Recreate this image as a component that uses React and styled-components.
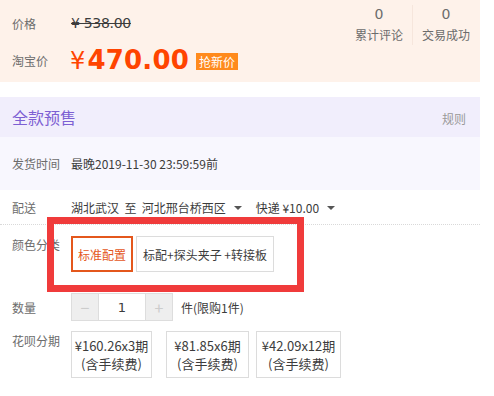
import styled, { createGlobalStyle } from 'styled-components';

const GlobalStyle = createGlobalStyle`
  body {
    margin: 0;
    background: #fff;
    font-family: "Noto Sans CJK SC", "Liberation Sans", sans-serif;
    font-size: 12px;
    color: #3c3c3c;
  }
`;

const installments = [
  { price: '¥160.26x3期', width: 81, gap: 14 },
  { price: '¥81.85x6期', width: 83, gap: 7 },
  { price: '¥42.09x12期', width: 85, gap: 0 },
];

const App = () => (
  <Page>
    <GlobalStyle />
    <PriceBox>
      <PriceRows>
        <PriceRow>
          <Label>价格</Label>
          <OldPrice>¥ 538.00</OldPrice>
        </PriceRow>
        <PriceRow>
          <Label>淘宝价</Label>
          <NowPrice>
            <Yen>¥</Yen>470.00
          </NowPrice>
          <Badge>抢新价</Badge>
        </PriceRow>
      </PriceRows>
      <Stats>
        <Stat>
          <StatNum>0</StatNum>
          <StatText>累计评论</StatText>
        </Stat>
        <Stat last>
          <StatNum>0</StatNum>
          <StatText>交易成功</StatText>
        </Stat>
      </Stats>
    </PriceBox>

    <Presale>
      <PresaleHead>
        <PresaleTitle>全款预售</PresaleTitle>
        <RuleLink>规则</RuleLink>
      </PresaleHead>
      <PresaleBody>
        <Label>发货时间</Label>
        <span>最晚2019-11-30 23:59:59前</span>
      </PresaleBody>
    </Presale>

    <DeliveryRow>
      <Label>配送</Label>
      <Inline>
        湖北武汉&nbsp;&nbsp;至&nbsp;&nbsp;河北邢台桥西区<Caret />
      </Inline>
      <Inline>
        快递 ¥10.00<Caret />
      </Inline>
    </DeliveryRow>

    <SkuRow>
      <Label>颜色分类</Label>
      <Options>
        <Option selected>标准配置</Option>
        <Option>标配+探头夹子 +转接板</Option>
      </Options>
    </SkuRow>

    <QtyRow>
      <Label>数量</Label>
      <Stepper>
        <StepBtn>−</StepBtn>
        <QtyValue>1</QtyValue>
        <StepBtn>+</StepBtn>
      </Stepper>
      <span>件(限购1件)</span>
    </QtyRow>

    <HuabeiRow>
      <Label>花呗分期</Label>
      <Plans>
        {installments.map((p) => (
          <Plan key={p.price} style={{ width: p.width, marginRight: p.gap }}>
            <span>{p.price}</span>
            <span>(含手续费)</span>
          </Plan>
        ))}
      </Plans>
    </HuabeiRow>

    <Highlight />
  </Page>
);

const Page = styled.div`
  position: relative;
  width: 480px;
  height: 396px;
`;

const Label = styled.span`
  display: inline-block;
  width: 59px;
  padding-left: 12px;
  color: #6c6c6c;
  flex-shrink: 0;
`;

const PriceBox = styled.div`
  display: flex;
  justify-content: space-between;
  height: 82px;
  background: #fef2ea;
`;

const PriceRows = styled.div`
  display: flex;
  flex-direction: column;
  padding-top: 13px;
  gap: 14px;
`;

const PriceRow = styled.div`
  display: flex;
  align-items: center;
  height: 20px;
  &:last-child {
    height: 26px;
  }
`;

const OldPrice = styled.span`
  font-family: "DejaVu Sans", sans-serif;
  font-size: 14px;
  color: #3c3c3c;
  text-decoration: line-through;
  letter-spacing: -0.3px;
  white-space: pre;
`;

const NowPrice = styled.span`
  font-family: "DejaVu Sans", sans-serif;
  font-weight: bold;
  font-size: 26px;
  color: #ff4400;
  margin-left: -1px;
  letter-spacing: 0.2px;
`;

const Yen = styled.span`
  font-family: "DejaVu Sans", sans-serif;
  font-weight: normal;
  font-size: 24px;
  margin-right: 2px;
`;

const Badge = styled.span`
  margin-left: 7px;
  padding: 0 3px;
  height: 17px;
  line-height: 17px;
  background: #ff8a1c;
  color: #fff;
  font-size: 12px;
  margin-top: 2px;
`;

const Stats = styled.div`
  display: flex;
  padding-top: 5px;
  padding-right: 1px;
  height: 40px;
`;

const Stat = styled.div`
  display: flex;
  flex-direction: column;
  align-items: center;
  padding: 0 9px;
  border-right: ${(p) => (p.last ? 'none' : '1px solid #f6e6dc')};
`;

const StatNum = styled.span`
  font-family: "DejaVu Sans", sans-serif;
  font-size: 14px;
  color: #6c6c6c;
  line-height: 18px;
`;

const StatText = styled.span`
  color: #6c6c6c;
  line-height: 20px;
  margin-top: 2px;
`;

const Presale = styled.div`
  margin-top: 15px;
`;

const PresaleHead = styled.div`
  display: flex;
  align-items: center;
  justify-content: space-between;
  height: 40px;
  background: #f1eefc;
  padding: 0 14px 0 12px;
`;

const PresaleTitle = styled.span`
  font-size: 16px;
  color: #7d5fd3;
`;

const RuleLink = styled.span`
  color: #999;
  padding-top: 2px;
`;

const PresaleBody = styled.div`
  display: flex;
  align-items: center;
  height: 53px;
  background: #f8f7fe;
  padding-bottom: 1px;
  box-sizing: border-box;
`;

const DeliveryRow = styled.div`
  display: flex;
  align-items: center;
  height: 35px;
  padding-top: 1px;
  border-bottom: 1px dotted #d9d9d9;
  box-sizing: border-box;
`;

const Inline = styled.span`
  display: inline-flex;
  align-items: center;
  margin-right: 14px;
  color: #3c3c3c;
`;

const Caret = styled.span`
  margin-left: 8px;
  width: 0;
  height: 0;
  border-left: 4px solid transparent;
  border-right: 4px solid transparent;
  border-top: 4px solid #555;
`;

const SkuRow = styled.div`
  display: flex;
  align-items: flex-start;
  padding-top: 11px;
`;

const Options = styled.div`
  display: flex;
  gap: 3px;
`;

const Option = styled.div`
  height: 36px;
  box-sizing: border-box;
  display: flex;
  align-items: center;
  padding: 0 ${(p) => (p.selected ? '5px' : '6px')};
  border: ${(p) => (p.selected ? '2px solid #e4571c' : '1px solid #dcdcdc')};
  color: ${(p) => (p.selected ? '#e4571c' : '#3c3c3c')};
  background: #fff;
  font-size: 12px;
  white-space: pre;
`;

const QtyRow = styled.div`
  display: flex;
  align-items: center;
  margin-top: 21px;
  height: 28px;
  & > span:last-child {
    margin-left: 8px;
  }
`;

const Stepper = styled.div`
  display: flex;
  height: 28px;
`;

const StepBtn = styled.div`
  width: 26px;
  border: 1px solid #ddd;
  background: #eee;
  color: #ccc;
  display: flex;
  align-items: center;
  justify-content: center;
  font-size: 16px;
`;

const QtyValue = styled.div`
  width: 46px;
  border-top: 1px solid #ddd;
  border-bottom: 1px solid #ddd;
  display: flex;
  align-items: center;
  justify-content: center;
  font-family: "DejaVu Sans", sans-serif;
  font-size: 13px;
  color: #3c3c3c;
`;

const HuabeiRow = styled.div`
  display: flex;
  align-items: flex-start;
  margin-top: 10px;
  & > ${Label} {
    padding-top: 1px;
  }
`;

const Plans = styled.div`
  display: flex;
`;

const Plan = styled.div`
  box-sizing: border-box;
  height: 47px;
  border: 1px solid #dcdcdc;
  display: flex;
  flex-direction: column;
  align-items: center;
  justify-content: center;
  line-height: 18px;
  color: #3c3c3c;
  font-size: 13px;
  white-space: nowrap;
`;

const Highlight = styled.div`
  position: absolute;
  left: 47px;
  top: 217px;
  width: 257px;
  height: 75px;
  box-sizing: border-box;
  border: 7px solid #f03b3b;
  pointer-events: none;
`;

export default App;
